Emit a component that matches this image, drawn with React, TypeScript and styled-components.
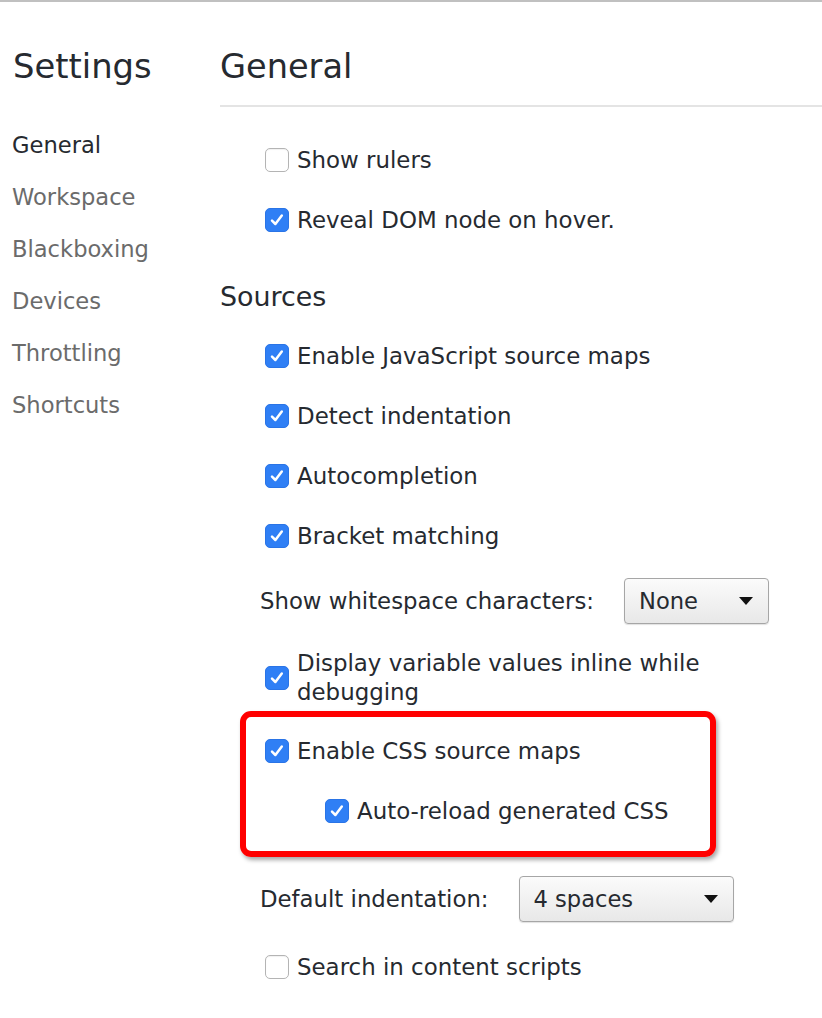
import React from "react";
import styled, { createGlobalStyle } from "styled-components";

const Global = createGlobalStyle`
  html, body { margin: 0; padding: 0; background: #fff; }
  body { font-family: "DejaVu Sans", "Liberation Sans", sans-serif; color: #262a30; }
`;

const Page = styled.div`
  width: 822px;
  min-height: 1018px;
  border-top: 2px solid #c0c0c0;
  display: flex;
  box-sizing: border-box;
`;

const Sidebar = styled.nav`
  width: 220px;
  flex-shrink: 0;
  padding: 45px 0 0 12px;
  box-sizing: border-box;
`;

const SidebarTitle = styled.div`
  font-size: 33.8px;
  line-height: 40px;
  color: #262a30;
  padding-left: 1px;
  margin-bottom: 32px;
`;

const NavItem = styled.div<{ $active?: boolean }>`
  font-size: 22.6px;
  line-height: 52px;
  color: ${(p) => (p.$active ? "#262a30" : "#6b6b6b")};
`;

const Main = styled.main`
  flex: 1;
  padding-top: 45px;
`;

const PageTitle = styled.div`
  font-size: 33.6px;
  line-height: 40px;
  margin-bottom: 18px;
`;

const Divider = styled.div`
  height: 2px;
  background: #e4e4e4;
`;

const Content = styled.div`
  padding-top: 23px;
`;

const SectionTitle = styled.div`
  font-size: 26.9px;
  line-height: 36px;
  margin: 29px 0 11px;
`;

const CheckRow = styled.label<{ $indent?: number; $tall?: boolean }>`
  display: flex;
  align-items: center;
  gap: 8px;
  min-height: 60px;
  padding-left: ${(p) => p.$indent ?? 45}px;
  font-size: 22.9px;
  line-height: 29px;
  ${(p) => (p.$tall ? "padding-top: 13px; padding-bottom: 4px; min-height: 0;" : "")}
`;

const Box = styled.span<{ $checked?: boolean }>`
  width: 24px;
  height: 24px;
  flex-shrink: 0;
  box-sizing: border-box;
  border-radius: 5px;
  display: flex;
  align-items: center;
  justify-content: center;
  background: ${(p) => (p.$checked ? "#2f7ff5" : "#fff")};
  border: 1px solid ${(p) => (p.$checked ? "#2a74e6" : "#b4b4b4")};
  box-shadow: ${(p) => (p.$checked ? "none" : "inset 0 1px 1px rgba(0,0,0,0.06)")};
`;

const LabelText = styled.span`
  max-width: 420px;
`;

const SelectRow = styled.div<{ $height: number; $top?: number }>`
  display: flex;
  align-items: center;
  height: ${(p) => p.$height}px;
  padding-top: ${(p) => p.$top ?? 0}px;
  padding-left: 40px;
  font-size: 22.8px;
  white-space: nowrap;
`;

const SelectBox = styled.div<{ $width: number }>`
  margin-left: 30px;
  width: ${(p) => p.$width}px;
  flex-shrink: 0;
  height: 46px;
  box-sizing: border-box;
  border: 1px solid #a6a6a6;
  border-radius: 4px;
  background: linear-gradient(#fbfbfb, #e8e8e8);
  box-shadow: 0 1px 1px rgba(0,0,0,0.12);
  display: flex;
  align-items: center;
  justify-content: space-between;
  padding: 0 15px 0 14px;
  font-size: 22.6px;
  color: #262a30;
`;

const Highlight = styled.div`
  margin-left: 20px;
  width: 476px;
  box-sizing: border-box;
  border: 6px solid #ff0000;
  border-radius: 11px;
  box-shadow: 2px 3px 4px rgba(0, 0, 0, 0.35);
  padding: 4px 0 10px;
`;

const Check = ({ checked }: { checked?: boolean }) => (
  <Box $checked={checked}>
    {checked && (
      <svg width="18" height="18" viewBox="0 0 18 18">
        <path d="M4 9.6 L7.4 13 L13.8 4.6" fill="none" stroke="#fff" strokeWidth="2.5" strokeLinecap="round" strokeLinejoin="round" />
      </svg>
    )}
  </Box>
);

const Arrow = () => (
  <svg width="14" height="8" viewBox="0 0 14 8">
    <path d="M0 0 H14 L7 8 Z" fill="#111" />
  </svg>
);

const Item = ({ label, checked, indent, tall }: { label: string; checked?: boolean; indent?: number; tall?: boolean }) => (
  <CheckRow $indent={indent} $tall={tall}>
    <Check checked={checked} />
    <LabelText>{label}</LabelText>
  </CheckRow>
);

export default function App() {
  const nav = ["General", "Workspace", "Blackboxing", "Devices", "Throttling", "Shortcuts"];
  return (
    <>
      <Global />
      <Page>
        <Sidebar>
          <SidebarTitle>Settings</SidebarTitle>
          {nav.map((n, i) => (
            <NavItem key={n} $active={i === 0}>{n}</NavItem>
          ))}
        </Sidebar>
        <Main>
          <PageTitle>General</PageTitle>
          <Divider />
          <Content>
            <Item label="Show rulers" />
            <Item label="Reveal DOM node on hover." checked />
            <SectionTitle>Sources</SectionTitle>
            <Item label="Enable JavaScript source maps" checked />
            <Item label="Detect indentation" checked />
            <Item label="Autocompletion" checked />
            <Item label="Bracket matching" checked />
            <SelectRow $height={70}>
              Show whitespace characters:
              <SelectBox $width={145}>
                None
                <Arrow />
              </SelectBox>
            </SelectRow>
            <Item label="Display variable values inline while debugging" checked tall />
            <Highlight>
              <Item label="Enable CSS source maps" checked indent={19} />
              <Item label="Auto-reload generated CSS" checked indent={79} />
            </Highlight>
            <SelectRow $height={76} $top={4}>
              Default indentation:
              <SelectBox $width={215}>
                4 spaces
                <Arrow />
              </SelectBox>
            </SelectRow>
            <Item label="Search in content scripts" />
          </Content>
        </Main>
      </Page>
    </>
  );
}
